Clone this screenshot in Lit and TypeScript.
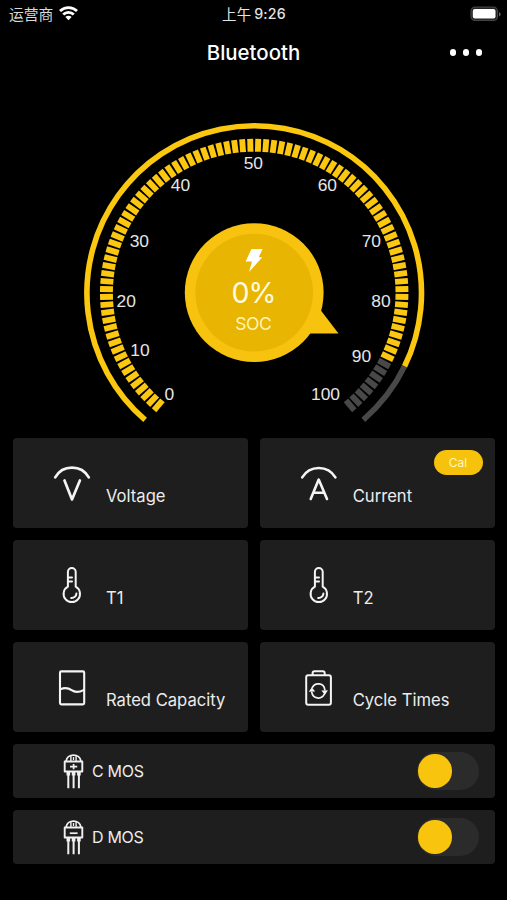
import { LitElement, html, css, svg } from "lit";
import { customElement, property } from "lit/decorators.js";

const CX = 254.2;
const CY = 293;

function polar(r: number, deg: number): string {
  const a = (deg * Math.PI) / 180;
  return `${(CX + r * Math.sin(a)).toFixed(2)} ${(CY - r * Math.cos(a)).toFixed(2)}`;
}

function arc(r: number, from: number, to: number): string {
  return `M${polar(r, from)}A${r} ${r} 0 ${to - from > 180 ? 1 : 0} 1 ${polar(r, to)}`;
}

@customElement("soc-gauge")
export class SocGauge extends LitElement {
  static styles = css`
    :host { display: block; }
    svg { display: block; width: 100%; height: 361px; }
    .on { stroke: #fcc70f; }
    .off { stroke: #484848; }
    .line { fill: none; stroke-width: 5.6; }
    .tick { stroke-width: 5.9; }
    .num { font: 17.4px "Liberation Sans", Arial, sans-serif; fill: #e6e6e6; text-anchor: middle; }
    .rim { fill: #f8c30e; }
    .disc { fill: #e8b502; }
    .bolt { fill: #fff; }
    .value { font: 400 28.5px Inter, sans-serif; fill: #fffbe0; text-anchor: middle; letter-spacing: -1.2px; }
    .unit { font: 400 17.5px Inter, sans-serif; fill: #fff4b8; text-anchor: middle; letter-spacing: -0.4px; }
  `;

  render() {
    const ticks = Array.from({ length: 94 }, (_, i) => -139.5 + i * 3);
    const labels: [number, number, number][] = [
      [0, 169.3, 394], [10, 140, 350.3], [20, 126.2, 301.8], [30, 139.3, 241],
      [40, 180.4, 185.5], [50, 253.3, 163.5], [60, 327.3, 185.8], [70, 371.3, 241],
      [80, 381, 301.8], [90, 361.5, 356.5], [100, 325.5, 394],
    ];
    return html`
      <svg viewBox="0 77 507 361">
        <path class="line off" d=${arc(167.3, 116, 139.3)} />
        <path class="line on" d=${arc(167.3, -139.3, 116)} />
        ${ticks.map((t) => svg`<path class="tick ${t > 117 ? "off" : "on"}" d="M${polar(141.3, t)}L${polar(154.2, t)}" />`)}
        ${labels.map(([n, x, y]) => svg`<text class="num" x=${x} y=${y + 5.5}>${n}</text>`)}
        <path class="rim" d="M338.5 333.6L319 308L300 333.6Z" />
        <circle class="rim" cx="254.2" cy="292.6" r="69.4" />
        <circle class="disc" cx="254.2" cy="292.6" r="58.8" />
        <path class="bolt" d="M251.5 249H262.6L258.7 257.2H262.3L249 272L252 261.4H245.6Z" />
        <text class="value" x="253.4" y="303.3">0%</text>
        <text class="unit" x="253.4" y="329.8">SOC</text>
      </svg>
    `;
  }
}

const icons = {
  voltage: svg`<g stroke-width="2.7"><path d="M3.2 15.4A19.3 19.3 0 0 1 36.8 15.4"/><path d="M12.5 18.4L20 37.4L27.9 18.4"/></g>`,
  current: svg`<g stroke-width="2.6"><path d="M3.2 15.4A19.3 19.3 0 0 1 36.4 15.4"/><path d="M11.7 37L19.7 17.6L28 37M14.5 30.8H25.3"/></g>`,
  thermo: svg`<g stroke-width="2"><path d="M15.9 22.7V8A3.9 3.9 0 0 1 23.7 8V22.7A8.2 8.2 0 1 1 15.9 22.7Z"/><path d="M16 13.6H20M16 17.6H20M24.4 29.4A4.7 4.7 0 0 1 19.2 34"/></g>`,
  capacity: svg`<g stroke-width="2.1"><rect x="8" y="5.4" width="24.2" height="33" rx="1.3"/><path d="M8.2 23.4C12 21.6 16 21.6 19.6 24.2C23.5 27 27 26.5 32 23.8"/></g>`,
  cycle: svg`<g stroke-width="2"><rect x="7.2" y="9.2" width="24.7" height="29.6" rx="2"/><path d="M13.6 9V7A1.8 1.8 0 0 1 15.4 5.3H23.9A1.8 1.8 0 0 1 25.7 7V9"/></g>
    <g stroke-width="1.7"><path d="M13.4 21.4A6.6 6.6 0 0 1 25.8 23.6M25.2 28.4A6.6 6.6 0 0 1 12.8 26.4"/></g>
    <path class="solid" d="M9.8 25.8L12.8 21.2L16.2 25.4ZM22.4 24.6L28.9 24.2L25.9 28.9Z"/>`,
};

@customElement("metric-card")
export class MetricCard extends LitElement {
  @property() label = "";
  @property() icon: keyof typeof icons = "voltage";
  @property() badge = "";

  static styles = css`
    :host {
      display: flex; position: relative; box-sizing: border-box; height: 89.8px;
      padding: 24px 0 0 39px; gap: 14px; background: #1e1e1e; border-radius: 4px;
    }
    svg { width: 40px; height: 44px; flex: none; fill: none; stroke: #f4f4f4; stroke-linecap: round; stroke-linejoin: round; }
    .solid { fill: #f4f4f4; stroke: none; }
    .label { font: 400 16.6px/20px Inter, sans-serif; color: #ececec; padding-top: 24px; white-space: nowrap; }
    .badge {
      position: absolute; top: 12px; right: 12px; width: 49px; height: 25px; border-radius: 13px;
      background: #f6c20b; color: #fff6c8; font: 400 12px/25px Inter, sans-serif; text-align: center;
    }
  `;

  render() {
    return html`
      <svg viewBox="0 0 40 44">${icons[this.icon]}</svg>
      <span class="label">${this.label}</span>
      ${this.badge ? html`<span class="badge">${this.badge}</span>` : null}
    `;
  }
}

@customElement("mos-row")
export class MosRow extends LitElement {
  @property() label = "";
  @property() sign = "plus";

  static styles = css`
    :host {
      display: flex; align-items: center; box-sizing: border-box; height: 54px;
      padding: 0 16px 0 47px; background: #1e1e1e; border-radius: 4px;
    }
    svg { width: 28px; height: 40px; fill: none; stroke: #f0f0f0; stroke-width: 1.9; stroke-linejoin: round; }
    .label { flex: 1; margin-left: 4px; font: 400 16px/20px Inter, sans-serif; color: #ececec; letter-spacing: -0.3px; }
    .track { display: flex; align-items: center; width: 62px; height: 38px; border-radius: 19px; background: #2b2b2b; }
    .knob { width: 33.5px; height: 33.5px; border-radius: 50%; background: #f8c40e; margin-left: 1.5px; }
  `;

  render() {
    return html`
      <svg viewBox="0 0 28 40">
        <path d="M4.7 10.5H22.3V20.5H4.7Z" />
        <path d="M6 10.3C6.6 6.4 9.8 4.1 13.5 4.1S20.4 6.4 21 10.3" />
        <path d="M10.9 5V10M16.1 5V10" stroke-width="1.4" />
        <path d="M13.5 6V9" stroke-width="1.3" />
        <path d=${this.sign === "plus" ? "M10 15.6H17.2M13.6 13V18.2" : "M9.8 16.2H17.6"} stroke-width="1.7" />
        <path d="M8.3 20.5V24.5M13.6 20.5V24.5M18.9 20.5V24.5" stroke-width="3.6" />
        <path d="M8.3 24V37.3M13.6 24V37.3M18.9 24V37.3" stroke-width="2" />
      </svg>
      <span class="label">${this.label}</span>
      <span class="track"><span class="knob"></span></span>
    `;
  }
}

@customElement("app-root")
export class AppRoot extends LitElement {
  static styles = css`
    :host { display: block; height: 900px; overflow: hidden; background: #000; color: #fff; font-family: Inter, "Noto Sans CJK SC", sans-serif; }
    .status { display: grid; grid-template-columns: 1fr auto 1fr; align-items: center; height: 27px; padding: 0 6px 0 9px; }
    .carrier { display: flex; align-items: center; gap: 6px; font: 400 14.8px/26px "Noto Sans CJK SC", sans-serif; color: #d8d8d8; }
    .wifi { width: 19px; height: 15px; }
    .time { display: flex; gap: 3px; margin-right: 2px; font: 500 14.2px/27px Inter, "Noto Sans CJK SC", sans-serif; color: #e4e4e4; letter-spacing: 0.2px; }
    .meridiem { font: 400 14.4px/27px "Noto Sans CJK SC", sans-serif; }
    .battery { justify-self: end; width: 31px; height: 16px; }
    .header { display: grid; grid-template-columns: 1fr auto 1fr; align-items: center; height: 50px; padding: 0 25px; }
    .title { grid-column: 2; font: 500 20.4px/51px Inter, sans-serif; }
    .more { justify-self: end; display: flex; gap: 6.4px; }
    .dot { width: 6.4px; height: 6.4px; border-radius: 50%; background: #fff; }
    .panel { display: grid; gap: 12.2px; padding: 0 12.5px 0 13px; }
    .cards { display: grid; grid-template-columns: 1fr 1fr; gap: 12.2px 12px; }
  `;

  render() {
    return html`
      <div class="status">
        <div class="carrier">
          <span>运营商</span>
          <svg class="wifi" viewBox="0 0 19 15" fill="none" stroke="#fff" stroke-width="2.8">
            <path d="M1 5.1A12.2 12.2 0 0 1 18 5.1" />
            <path d="M4.2 8.5A7.6 7.6 0 0 1 14.8 8.5" />
            <path d="M9.5 14.3L6.4 11A4.4 4.4 0 0 1 12.6 11Z" fill="#fff" stroke="none" />
          </svg>
        </div>
        <div class="time"><span class="meridiem">上午</span><span>9:26</span></div>
        <svg class="battery" viewBox="0 0 31 16">
          <rect x="1" y="1.2" width="26.5" height="13.2" rx="4" fill="#222" stroke="#444" stroke-width="1.2" />
          <rect x="2.8" y="3" width="22.7" height="9.4" rx="2" fill="#fff" />
          <path d="M29 6V10.5Q30.6 9.6 30.6 8.2T29 6Z" fill="#666" />
        </svg>
      </div>
      <div class="header">
        <span class="title">Bluetooth</span>
        <div class="more"><span class="dot"></span><span class="dot"></span><span class="dot"></span></div>
      </div>
      <soc-gauge></soc-gauge>
      <div class="panel">
        <div class="cards">
          <metric-card label="Voltage" icon="voltage"></metric-card>
          <metric-card label="Current" icon="current" badge="Cal"></metric-card>
          <metric-card label="T1" icon="thermo"></metric-card>
          <metric-card label="T2" icon="thermo"></metric-card>
          <metric-card label="Rated Capacity" icon="capacity"></metric-card>
          <metric-card label="Cycle Times" icon="cycle"></metric-card>
        </div>
        <mos-row label="C MOS" sign="plus"></mos-row>
        <mos-row label="D MOS" sign="minus"></mos-row>
      </div>
    `;
  }
}
